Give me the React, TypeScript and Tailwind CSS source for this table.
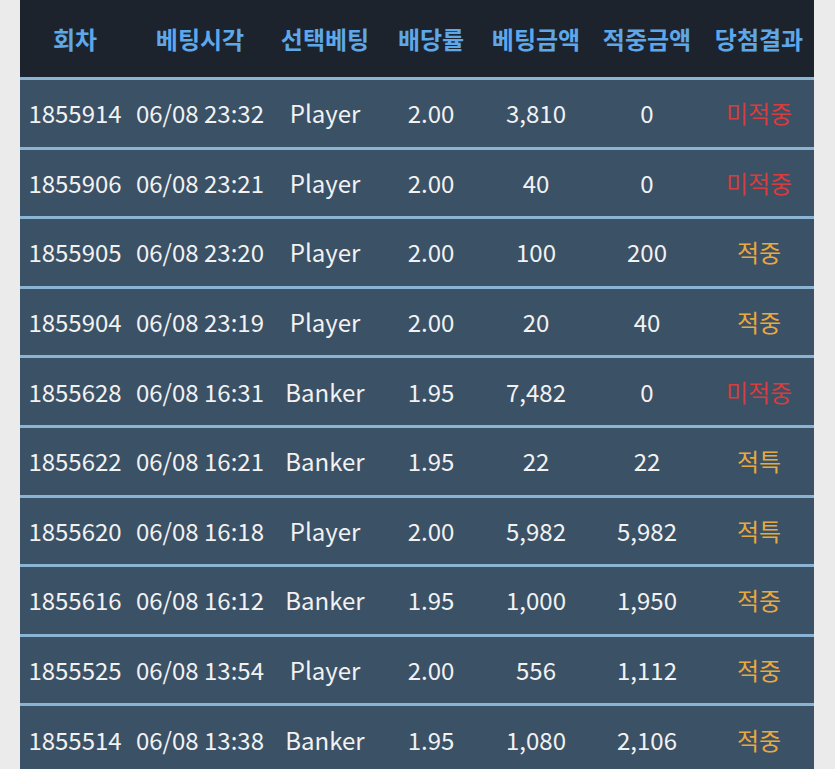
import React from 'react';

type Bet = {
  round: string;
  time: string;
  pick: string;
  odds: string;
  amount: string;
  payout: string;
  result: string;
};

const bets: Bet[] = [
  { round: '1855914', time: '06/08 23:32', pick: 'Player', odds: '2.00', amount: '3,810', payout: '0', result: '미적중' },
  { round: '1855906', time: '06/08 23:21', pick: 'Player', odds: '2.00', amount: '40', payout: '0', result: '미적중' },
  { round: '1855905', time: '06/08 23:20', pick: 'Player', odds: '2.00', amount: '100', payout: '200', result: '적중' },
  { round: '1855904', time: '06/08 23:19', pick: 'Player', odds: '2.00', amount: '20', payout: '40', result: '적중' },
  { round: '1855628', time: '06/08 16:31', pick: 'Banker', odds: '1.95', amount: '7,482', payout: '0', result: '미적중' },
  { round: '1855622', time: '06/08 16:21', pick: 'Banker', odds: '1.95', amount: '22', payout: '22', result: '적특' },
  { round: '1855620', time: '06/08 16:18', pick: 'Player', odds: '2.00', amount: '5,982', payout: '5,982', result: '적특' },
  { round: '1855616', time: '06/08 16:12', pick: 'Banker', odds: '1.95', amount: '1,000', payout: '1,950', result: '적중' },
  { round: '1855525', time: '06/08 13:54', pick: 'Player', odds: '2.00', amount: '556', payout: '1,112', result: '적중' },
  { round: '1855514', time: '06/08 13:38', pick: 'Banker', odds: '1.95', amount: '1,080', payout: '2,106', result: '적중' },
];

const headers = ['회차', '베팅시각', '선택베팅', '배당률', '베팅금액', '적중금액', '당첨결과'];

// fixed column widths so the centres line up with the screenshot
const grid = 'grid grid-cols-[110px_140px_110px_102px_108px_114px_110px]';

const App = () => {
  return (
    <div className="min-h-screen bg-[#ebebeb] font-['Noto_Sans_CJK_KR','Noto_Sans',sans-serif]">
      <div className="ml-[20px] w-[794px]">
        <div className={`${grid} h-[77px] items-center bg-[#1c232d] text-[24px] font-bold text-[#5ea7e8]`}>
          {headers.map((h) => (
            <div key={h} className="text-center">{h}</div>
          ))}
        </div>
        {bets.map((b) => (
          <div
            key={b.round}
            className={`${grid} h-[69.6px] items-center border-t-[3px] border-[#8bb3d3] bg-[#3b5166] text-[24px] text-[#f2f2f2]`}
          >
            <div className="text-center">{b.round}</div>
            <div className="text-center">{b.time}</div>
            <div className="text-center">{b.pick}</div>
            <div className="text-center">{b.odds}</div>
            <div className="text-center">{b.amount}</div>
            <div className="text-center">{b.payout}</div>
            <div className={`text-center ${b.result === '미적중' ? 'text-[#d83c3c]' : 'text-[#e8a93e]'}`}>{b.result}</div>
          </div>
        ))}
      </div>
    </div>
  );
};

export default App;
